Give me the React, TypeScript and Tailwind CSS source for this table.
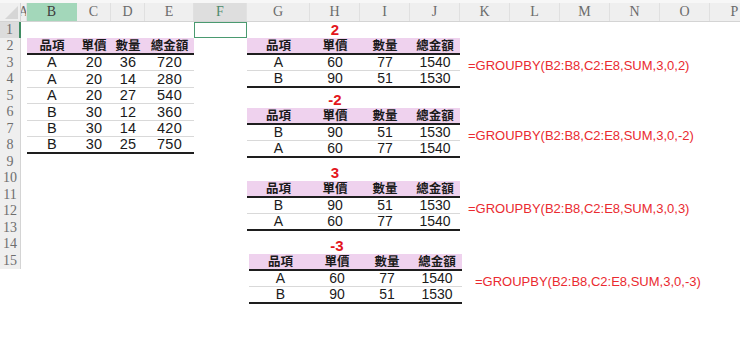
import React from "react";

const colWidths: [string, string][] = [
  ["A", "w-[6px]"],
  ["B", "w-[50px]"],
  ["C", "w-[34px]"],
  ["D", "w-[34px]"],
  ["E", "w-[49px]"],
  ["F", "w-[53px]"],
  ["G", "w-[63px]"],
  ["H", "w-[50px]"],
  ["I", "w-[50px]"],
  ["J", "w-[50px]"],
  ["K", "w-[50px]"],
  ["L", "w-[50px]"],
  ["M", "w-[50px]"],
  ["N", "w-[50px]"],
  ["O", "w-[50px]"],
  ["P", "w-[50px]"],
];

const heads = ["品項", "單價", "數量", "總金額"];

const leftRows = [
  ["A", "20", "36", "720"],
  ["A", "20", "14", "280"],
  ["A", "20", "27", "540"],
  ["B", "30", "12", "360"],
  ["B", "30", "14", "420"],
  ["B", "30", "25", "750"],
];

type Group = {
  title: string;
  rows: string[][];
  formula: string;
  gap: string;
  shift: string;
  formulaPad: string;
};

const groups: Group[] = [
  {
    title: "2",
    rows: [["A", "60", "77", "1540"], ["B", "90", "51", "1530"]],
    formula: "=GROUPBY(B2:B8,C2:E8,SUM,3,0,2)",
    gap: "mt-0",
    shift: "ml-0",
    formulaPad: "pl-[8px]",
  },
  {
    title: "-2",
    rows: [["B", "90", "51", "1530"], ["A", "60", "77", "1540"]],
    formula: "=GROUPBY(B2:B8,C2:E8,SUM,3,0,-2)",
    gap: "mt-[4px]",
    shift: "ml-0",
    formulaPad: "pl-[8px]",
  },
  {
    title: "3",
    rows: [["B", "90", "51", "1530"], ["A", "60", "77", "1540"]],
    formula: "=GROUPBY(B2:B8,C2:E8,SUM,3,0,3)",
    gap: "mt-[7px]",
    shift: "ml-0",
    formulaPad: "pl-[8px]",
  },
  {
    title: "-3",
    rows: [["A", "60", "77", "1540"], ["B", "90", "51", "1530"]],
    formula: "=GROUPBY(B2:B8,C2:E8,SUM,3,0,-3)",
    gap: "mt-[7px]",
    shift: "ml-[2px]",
    formulaPad: "pl-[13px]",
  },
];

const cjk = "font-['Noto_Sans_CJK_TC','Noto_Sans',sans-serif]";
const latin = "font-['Liberation_Sans','Noto_Sans_CJK_TC',sans-serif]";

function HeaderBar() {
  return (
    <div className="flex h-[21.5px] border-t-[3px] border-[#f7f7f7] bg-[#efefef] border-b border-b-[#d4d4d4] font-['Liberation_Serif',serif] text-[14px] text-[#6b6b6b]">
      <div className="relative w-[21px] shrink-0 border-r border-[#d4d4d4]">
        <svg className="absolute bottom-[2px] right-[2px]" width="13" height="13" viewBox="0 0 13 13">
          <polygon points="13,0 13,13 0,13" fill="#d6d6d6" />
        </svg>
      </div>
      {colWidths.map(([name, w]) => (
        <div
          key={name}
          className={
            `${w} shrink-0 flex items-center justify-center overflow-hidden leading-none border-r ` +
            (name === "B"
              ? "bg-[#a3d7ba] text-[#3d3d3d] border-[#a3d7ba]"
              : name === "F"
              ? "bg-[#dedede] text-[#4f8a6c] border-[#e2e2e2]"
              : "border-[#e0e0e0]")
          }
        >
          {name}
        </div>
      ))}
    </div>
  );
}

function RowNumbers() {
  return (
    <div className="w-[21px] shrink-0 flex flex-col bg-[#efefef] border-r border-[#d4d4d4] font-['Liberation_Serif',serif] text-[14px] text-[#6e6e6e] leading-none self-start">
      {Array.from({ length: 15 }, (_, i) => (
        <div
          key={i}
          className={
            "h-[16.5px] flex items-center justify-center " +
            (i === 0 ? "bg-[#dcdcdc] border-r-2 border-[#3f8c62] -mr-px" : "")
          }
        >
          {i + 1}
        </div>
      ))}
    </div>
  );
}

function LeftTable() {
  return (
    <div className="w-[167px] shrink-0 mt-[16.5px]">
      <div className="grid grid-cols-[50px_34px_34px_49px] h-[16.5px] bg-[#efd2ee] border-b-2 border-[#1e1e1e]">
        {heads.map((h) => (
          <div key={h} className={`flex items-center justify-center ${cjk} font-bold text-[12.5px] leading-none text-[#1a1a1a]`}>
            {h}
          </div>
        ))}
      </div>
      {leftRows.map((r, i) => (
        <div
          key={i}
          className={
            "grid grid-cols-[50px_34px_34px_49px] h-[16.5px] " +
            (i === leftRows.length - 1 ? "border-b-2 border-[#1e1e1e]" : "border-b border-[#d9d9d9]")
          }
        >
          {r.map((c, j) => (
            <div key={j} className={`flex items-center justify-center ${latin} text-[14.5px] leading-none text-[#1a1a1a] tracking-[0.3px]`}>
              {c}
            </div>
          ))}
        </div>
      ))}
    </div>
  );
}

function GroupTable({ g }: { g: Group }) {
  return (
    <div className={`${g.gap} ${g.shift}`}>
      <div className="grid grid-cols-[63px_50px_50px_50px] w-[213px] h-[16.5px]">
        <div />
        <div className={`flex items-center justify-center ${latin} font-bold text-[15px] leading-[14px] text-[#e3161d]`}>
          {g.title}
        </div>
      </div>
      <div className="grid grid-cols-[63px_50px_50px_50px] w-[213px] h-[16.5px] bg-[#efd2ee] border-b-2 border-[#1e1e1e]">
        {heads.map((h) => (
          <div key={h} className={`flex items-center justify-center ${cjk} font-bold text-[12.5px] leading-none text-[#1a1a1a]`}>
            {h}
          </div>
        ))}
      </div>
      {g.rows.map((r, i) => (
        <div key={i} className="flex h-[16.5px]">
          <div
            className={
              "grid grid-cols-[63px_50px_50px_50px] w-[213px] shrink-0 " +
              (i === g.rows.length - 1 ? "border-b-2 border-[#1e1e1e]" : "border-b border-[#d9d9d9]")
            }
          >
            {r.map((c, j) => (
              <div key={j} className={`flex items-center justify-center ${latin} text-[14px] leading-none text-[#1a1a1a]`}>
                {c}
              </div>
            ))}
          </div>
          {i === 0 && (
            <div className={`${g.formulaPad} pt-[4px] ${latin} text-[13px] leading-none text-[#ea2a30] whitespace-nowrap`}>
              {g.formula}
            </div>
          )}
        </div>
      ))}
    </div>
  );
}

export default function App() {
  return (
    <div className="w-[740px] h-[338px] overflow-hidden bg-white">
      <HeaderBar />
      <div className="flex">
        <RowNumbers />
        <div className="w-[6px] shrink-0" />
        <LeftTable />
        <div className="w-[53px] shrink-0">
          <div className="h-[16.5px] border border-[#4a9a70]" />
        </div>
        <div className="flex flex-col">
          {groups.map((g) => (
            <GroupTable key={g.title} g={g} />
          ))}
        </div>
      </div>
    </div>
  );
}
